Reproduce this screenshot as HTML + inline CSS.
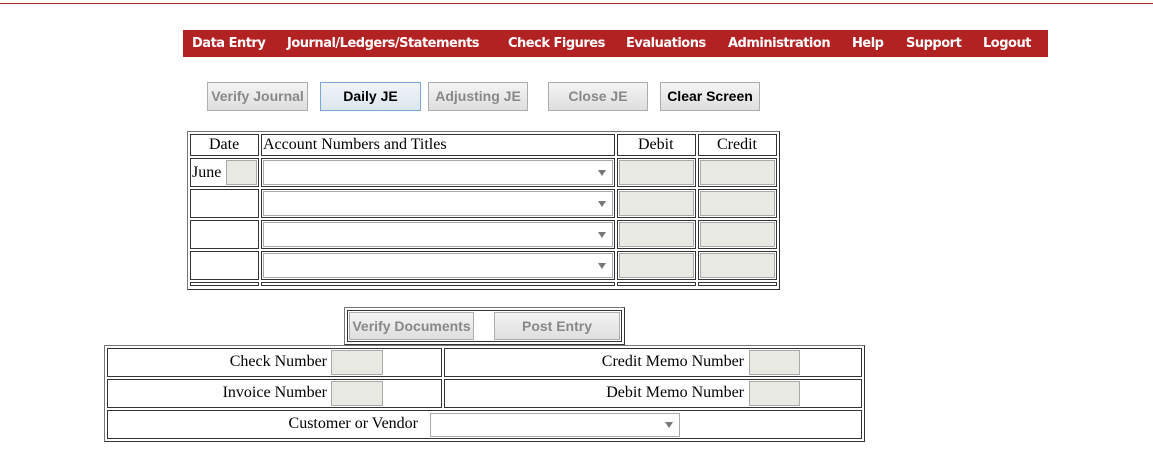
<!DOCTYPE html>
<html><head><style>
body{margin:0;width:1153px;height:467px;background:#fff;position:relative;overflow:hidden;font-family:"Liberation Serif",serif;}
.a{position:absolute;box-sizing:border-box;}
.nav{background:#b22222;left:183px;top:30px;width:865px;height:27px;}
.nl{position:absolute;top:36px;color:#fff;font:bold 13px "DejaVu Sans",sans-serif;letter-spacing:-0.5px;white-space:nowrap;}
.btn{position:absolute;box-sizing:border-box;border:1px solid #adadad;background:linear-gradient(#f4f4f4,#dedede);font:bold 14px "Liberation Sans",sans-serif;text-align:center;color:#888;}
.cell{position:absolute;box-sizing:border-box;border:1px solid #333;}
.tbl{position:absolute;box-sizing:border-box;border:1px solid #777;border-right-color:#333;border-bottom-color:#333;}
.inp{position:absolute;box-sizing:border-box;border:1px solid #a9a9a9;background:#e9e9e3;}
.sel{position:absolute;box-sizing:border-box;border:1px solid #a9a9a9;background:#fff;}
.sel:after{content:"";position:absolute;right:6px;top:50%;margin-top:-3px;border-left:4px solid transparent;border-right:4px solid transparent;border-top:6px solid #777;}
.t{position:absolute;font-size:16px;color:#000;white-space:nowrap;}
.r{position:absolute;font-size:16px;color:#000;white-space:nowrap;text-align:right;}
</style></head><body>
<div class="a" style="left:0;top:3px;width:1153px;height:1px;background:#b22222"></div>
<div class="a nav"></div>
<span class="nl" style="left:192px">Data Entry</span>
<span class="nl" style="left:287px">Journal/Ledgers/Statements</span>
<span class="nl" style="left:508px">Check Figures</span>
<span class="nl" style="left:626px">Evaluations</span>
<span class="nl" style="left:728px">Administration</span>
<span class="nl" style="left:852px">Help</span>
<span class="nl" style="left:906px">Support</span>
<span class="nl" style="left:983px">Logout</span>

<div class="btn" style="left:207px;top:82px;width:101px;height:29px;line-height:27px;">Verify Journal</div>
<div class="btn" style="left:320px;top:82px;width:101px;height:29px;line-height:27px;color:#000;border-color:#7aa7d8;background:linear-gradient(#f0f4f8,#dde6ee)">Daily JE</div>
<div class="btn" style="left:428px;top:82px;width:100px;height:29px;line-height:27px;">Adjusting JE</div>
<div class="btn" style="left:548px;top:82px;width:100px;height:29px;line-height:27px;">Close JE</div>
<div class="btn" style="left:660px;top:82px;width:100px;height:29px;line-height:27px;color:#000">Clear Screen</div>

<div class="tbl" style="left:187px;top:131px;width:593px;height:159px;"></div>
<div class="cell" style="left:190px;top:134px;width:69px;height:22px;"></div><span class="t" style="left:209px;top:136px">Date</span>
<div class="cell" style="left:261px;top:134px;width:354px;height:22px;"></div><span class="t" style="left:263px;top:136px">Account Numbers and Titles</span>
<div class="cell" style="left:617px;top:134px;width:79px;height:22px;"></div><span class="t" style="left:638px;top:136px">Debit</span>
<div class="cell" style="left:698px;top:134px;width:79px;height:22px;"></div><span class="t" style="left:717px;top:136px">Credit</span>

<div class="cell" style="left:190px;top:158px;width:69px;height:29px;"></div><span class="t" style="left:192px;top:164px">June</span><div class="inp" style="left:226px;top:160px;width:31px;height:25px"></div>
<div class="cell" style="left:261px;top:158px;width:354px;height:29px;"></div><div class="sel" style="left:263px;top:160px;width:350px;height:25px"></div>
<div class="cell" style="left:617px;top:158px;width:79px;height:29px;"></div><div class="inp" style="left:619px;top:160px;width:75px;height:25px"></div>
<div class="cell" style="left:698px;top:158px;width:79px;height:29px;"></div><div class="inp" style="left:700px;top:160px;width:75px;height:25px"></div>

<div class="cell" style="left:190px;top:189px;width:69px;height:29px;"></div>
<div class="cell" style="left:261px;top:189px;width:354px;height:29px;"></div><div class="sel" style="left:263px;top:191px;width:350px;height:25px"></div>
<div class="cell" style="left:617px;top:189px;width:79px;height:29px;"></div><div class="inp" style="left:619px;top:191px;width:75px;height:25px"></div>
<div class="cell" style="left:698px;top:189px;width:79px;height:29px;"></div><div class="inp" style="left:700px;top:191px;width:75px;height:25px"></div>

<div class="cell" style="left:190px;top:220px;width:69px;height:29px;"></div>
<div class="cell" style="left:261px;top:220px;width:354px;height:29px;"></div><div class="sel" style="left:263px;top:222px;width:350px;height:25px"></div>
<div class="cell" style="left:617px;top:220px;width:79px;height:29px;"></div><div class="inp" style="left:619px;top:222px;width:75px;height:25px"></div>
<div class="cell" style="left:698px;top:220px;width:79px;height:29px;"></div><div class="inp" style="left:700px;top:222px;width:75px;height:25px"></div>

<div class="cell" style="left:190px;top:251px;width:69px;height:29px;"></div>
<div class="cell" style="left:261px;top:251px;width:354px;height:29px;"></div><div class="sel" style="left:263px;top:253px;width:350px;height:25px"></div>
<div class="cell" style="left:617px;top:251px;width:79px;height:29px;"></div><div class="inp" style="left:619px;top:253px;width:75px;height:25px"></div>
<div class="cell" style="left:698px;top:251px;width:79px;height:29px;"></div><div class="inp" style="left:700px;top:253px;width:75px;height:25px"></div>

<div class="cell" style="left:190px;top:282px;width:69px;height:4px;"></div>
<div class="cell" style="left:261px;top:282px;width:354px;height:4px;"></div>
<div class="cell" style="left:617px;top:282px;width:79px;height:4px;"></div>
<div class="cell" style="left:698px;top:282px;width:79px;height:4px;"></div>

<div class="tbl" style="left:344px;top:307px;width:281px;height:38px;"></div>
<div class="cell" style="left:347px;top:310px;width:275px;height:32px;"></div>
<div class="btn" style="left:349px;top:312px;width:125px;height:28px;line-height:26px;">Verify Documents</div>
<div class="btn" style="left:494px;top:312px;width:126px;height:28px;line-height:26px;">Post Entry</div>

<div class="tbl" style="left:104px;top:345px;width:761px;height:97px;"></div>
<div class="cell" style="left:107px;top:348px;width:335px;height:29px;"></div><span class="r" style="right:826px;top:353px">Check Number</span><div class="inp" style="left:331px;top:350px;width:52px;height:25px"></div>
<div class="cell" style="left:444px;top:348px;width:418px;height:29px;"></div><span class="r" style="right:409px;top:353px">Credit Memo Number</span><div class="inp" style="left:749px;top:350px;width:51px;height:25px"></div>
<div class="cell" style="left:107px;top:379px;width:335px;height:29px;"></div><span class="r" style="right:826px;top:384px">Invoice Number</span><div class="inp" style="left:331px;top:381px;width:52px;height:25px"></div>
<div class="cell" style="left:444px;top:379px;width:418px;height:29px;"></div><span class="r" style="right:409px;top:384px">Debit Memo Number</span><div class="inp" style="left:749px;top:381px;width:51px;height:25px"></div>
<div class="cell" style="left:107px;top:410px;width:755px;height:29px;"></div><span class="r" style="right:735px;top:415px">Customer or Vendor</span><div class="sel" style="left:430px;top:413px;width:250px;height:24px"></div>
</body></html>
